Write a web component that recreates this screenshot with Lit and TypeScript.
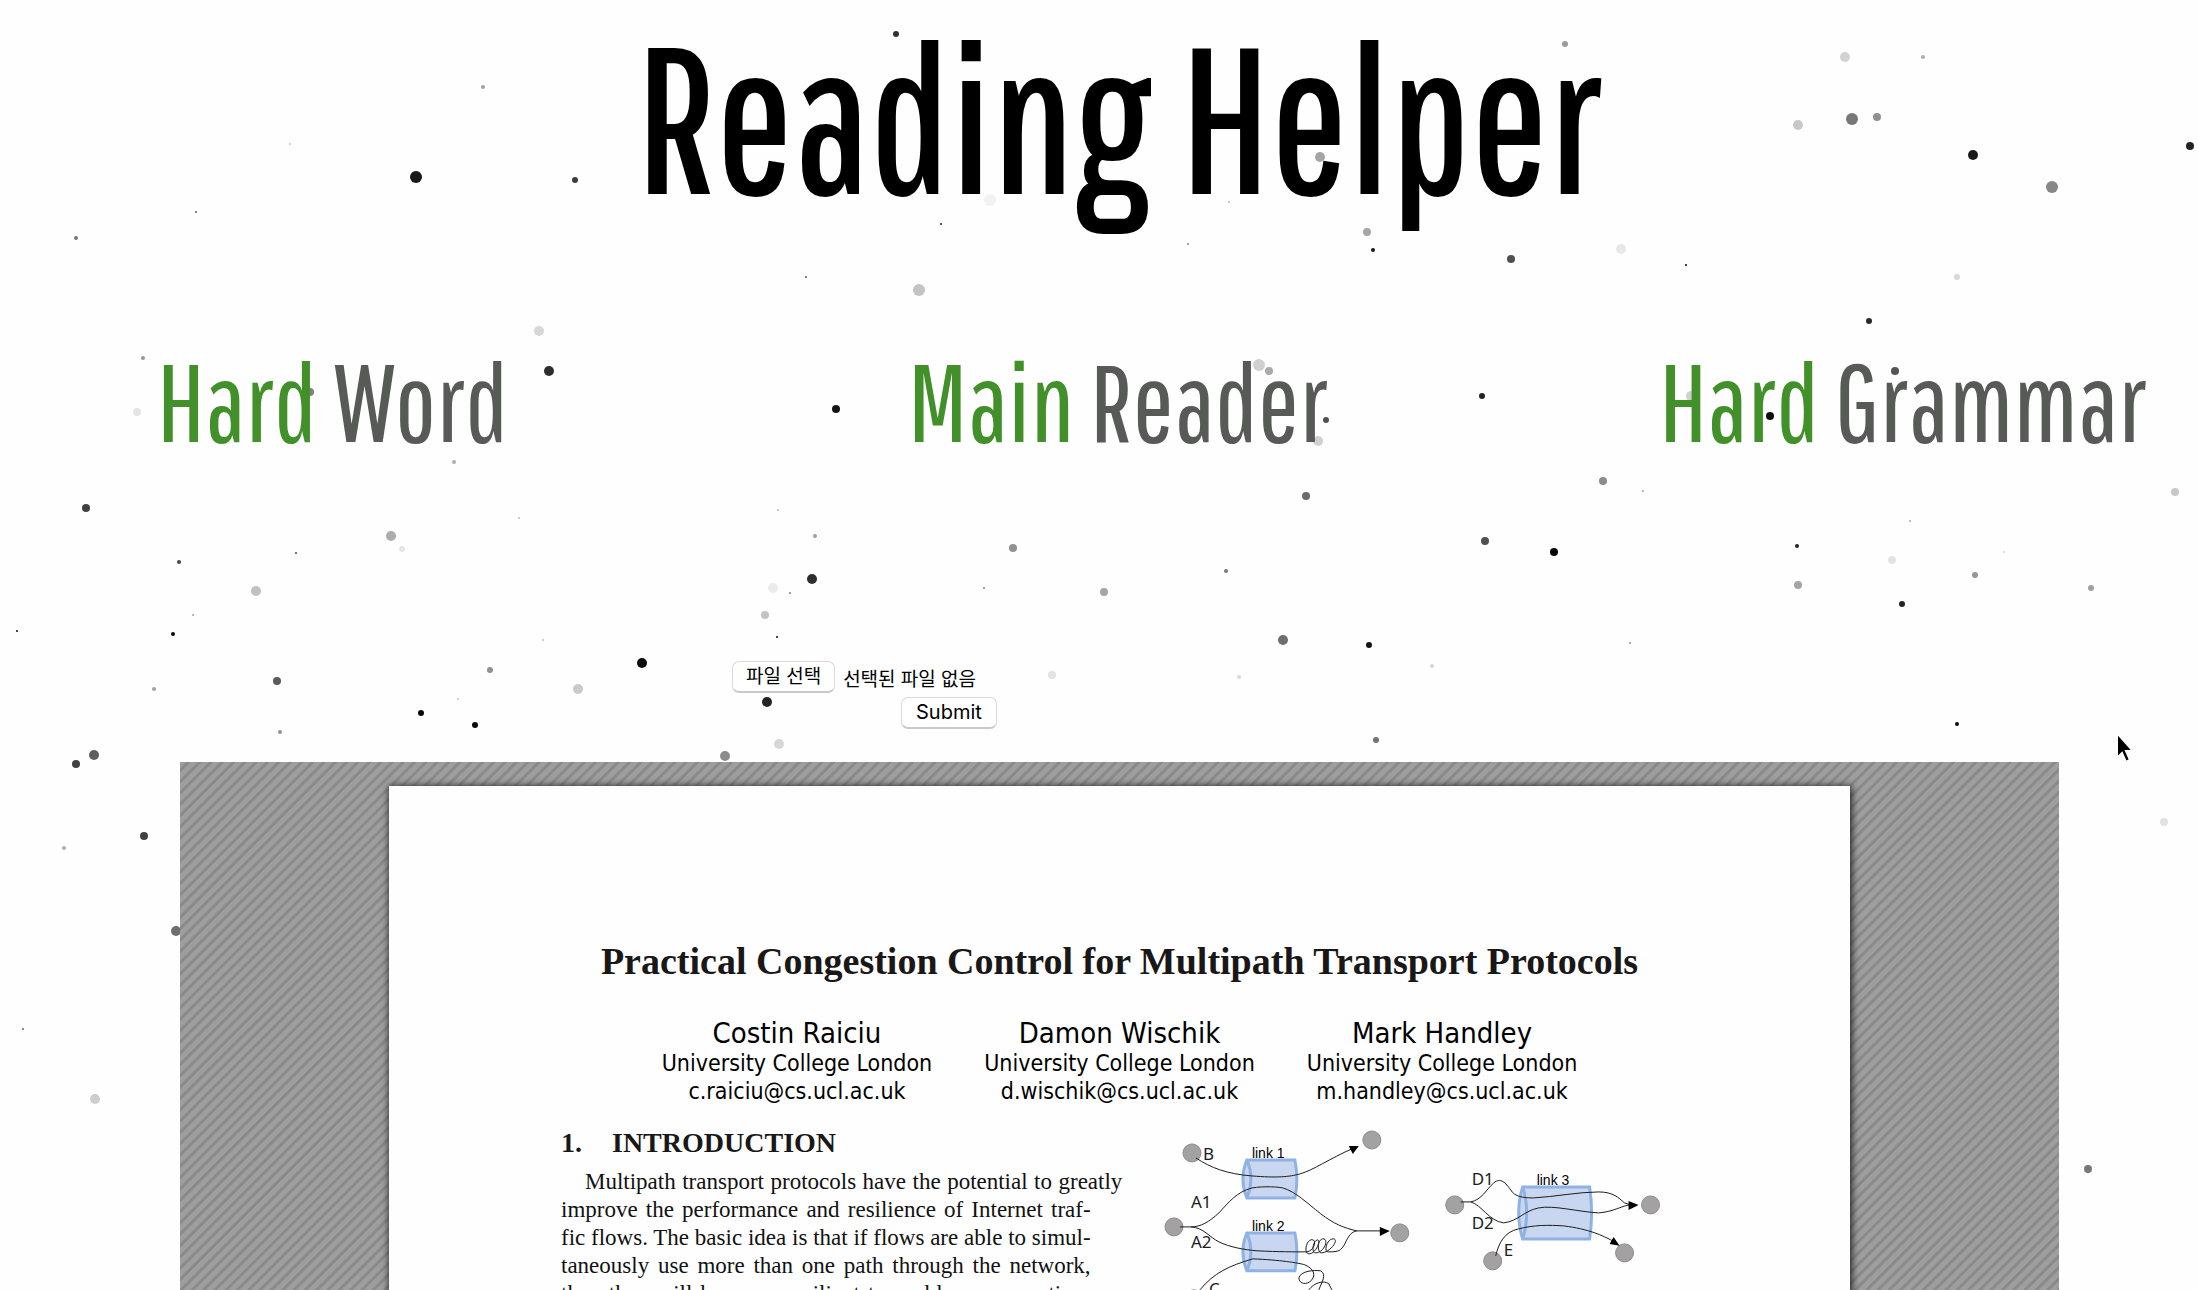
import { LitElement, html, svg, css } from "lit";
import { customElement } from "lit/decorators.js";

type Dot = [x: number, y: number, r: number, grey: number];

const DOTS: Dot[] = [
  [483, 87, 2, 160], [290, 144, 1, 190], [416, 177, 6, 25], [575, 180, 3, 60], [196, 212, 1, 90],
  [76, 238, 2, 120], [539, 331, 5, 215], [143, 358, 2, 150], [549, 371, 5, 45], [310, 392, 4, 130],
  [137, 412, 4, 228],
  [896, 34, 3, 50], [990, 200, 6, 242], [941, 224, 1, 30], [806, 277, 1, 90], [919, 290, 6, 195],
  [1188, 244, 1, 130], [1320, 157, 5, 165], [1367, 232, 4, 165], [1373, 250, 2, 25], [1229, 202, 1, 180],
  [1259, 365, 6, 208], [1269, 371, 4, 170], [1326, 420, 3, 80], [836, 409, 4, 20],
  [1565, 44, 3, 155], [1845, 57, 5, 210], [1923, 57, 2, 175], [1798, 125, 5, 200], [1852, 119, 6, 120],
  [1877, 117, 4, 145], [1973, 155, 5, 25], [2190, 146, 4, 35], [2052, 187, 6, 135], [1621, 249, 5, 232],
  [1511, 259, 4, 80], [1686, 265, 1, 10], [1957, 277, 3, 215], [1869, 321, 3, 40], [1895, 371, 4, 85],
  [1691, 396, 5, 208], [1770, 416, 4, 15], [1482, 396, 3, 35],
  [454, 462, 2, 175], [86, 508, 4, 65], [391, 536, 5, 172], [402, 549, 3, 230], [519, 518, 1, 185],
  [296, 553, 1, 70], [179, 562, 2, 70], [256, 591, 5, 192], [193, 615, 1, 165], [17, 631, 1, 10],
  [173, 634, 2, 10], [543, 640, 1, 195], [642, 663, 5, 10], [490, 670, 3, 145], [277, 681, 4, 90],
  [578, 689, 5, 202], [154, 689, 2, 160], [458, 699, 1, 195], [421, 713, 3, 10], [475, 725, 3, 10],
  [280, 732, 2, 150], [94, 755, 5, 95], [76, 764, 4, 65], [725, 756, 5, 140], [144, 836, 4, 65],
  [64, 848, 2, 175], [176, 931, 5, 110], [23, 1029, 1, 100], [95, 1099, 5, 205],
  [778, 510, 1, 185], [815, 536, 2, 160], [812, 579, 5, 45], [773, 588, 5, 235], [790, 593, 1, 130],
  [765, 615, 4, 195], [777, 637, 1, 10], [767, 702, 5, 35], [779, 744, 5, 215], [1013, 548, 4, 145],
  [984, 588, 1, 130], [1104, 592, 4, 165], [1226, 571, 2, 120], [1306, 496, 4, 105], [1318, 441, 5, 208],
  [1283, 640, 5, 110], [1369, 645, 3, 20], [1432, 666, 2, 215], [1239, 677, 2, 218], [1052, 675, 4, 226],
  [1376, 740, 3, 115],
  [1603, 481, 4, 140], [1643, 491, 1, 165], [2175, 492, 4, 200], [1910, 521, 1, 165], [1485, 541, 4, 80],
  [1554, 552, 4, 5], [1797, 546, 2, 35], [1892, 560, 4, 228], [2004, 552, 1, 210], [1798, 585, 4, 165],
  [1975, 575, 3, 150], [2091, 588, 3, 160], [1902, 604, 3, 35], [1630, 643, 1, 150], [1957, 724, 2, 10],
  [2164, 822, 4, 226], [2088, 1169, 4, 120],
];

const NODES = [[43, 43], [223, 30], [25, 117], [251, 123], [45, 189], [306, 95], [502, 95], [344, 151], [476, 143]];

const LINKS = [
  { x: 93, y: 50, w: 57, h: 38, name: "link 1", tx: 103 },
  { x: 93, y: 123, w: 57, h: 38, name: "link 2", tx: 103 },
  { x: 369, y: 77, w: 76, h: 52, name: "link 3", tx: 388 },
];

const FLOWS = [
  "M47 48C62 58 78 64 103 66S140 67 151 64C165 60 180 49 205 38",
  "M31 117H42C52 117 60 112 70 103C80 92 88 82 103 78C115 76 130 77 134 78C147 82 158 93 172 104C185 114 195 118 208 121H234",
  "M42 117C55 118 60 127 70 132C80 137 95 140 109 141C130 142 145 142 158 142C165 141 168 131 164 130C158 128 154 143 160 144C167 144 172 131 169 130C164 130 162 144 167 143C175 143 180 130 175 129C168 128 168 144 173 143C182 142 190 130 185 129C178 128 174 143 180 142C190 142 192 141 196 134C200 125 203 122 208 121",
  "M51 180C65 163 80 156 104 149C130 150 150 153 156 155C165 159 167 165 163 170C158 176 150 174 150 168C152 161 165 160 172 161C178 165 173 172 170 180",
  "M160 180C165 173 175 170 180 174L183 180",
  "M312 92H322C333 90 338 79 345 73C352 67 357 73 362 80C366 87 375 88 385 88C405 87 430 82 450 82C465 82 470 88 476 93L482 95",
  "M322 92C333 95 340 111 355 113C370 111 375 101 390 98C405 95 430 102 450 103C465 102 475 95 482 95",
  "M347 146C350 134 355 122 370 119C385 115 400 115 415 116C440 119 455 126 464 131",
];

const HEADS = ["210,36 200,36 204,44", "241,121 231,117 231,126", "490,95 480,91 480,100", "471,136 465,127 461,134"];

const LABELS: [string, number, number][] = [
  ["B", 54, 50], ["A1", 42, 98], ["A2", 42, 138], ["C", 60, 185], ["D1", 323, 75], ["D2", 323, 119], ["E", 355, 146],
];

@customElement("particle-field")
export class ParticleField extends LitElement {
  static styles = css`
    :host { display: block; }
    svg { display: block; width: 100%; height: 100%; }
  `;
  render() {
    return html`<svg aria-hidden="true">
      ${DOTS.map(([x, y, r, g]) => svg`<circle cx=${x} cy=${y} r=${r} fill="rgb(${g},${g},${g})"></circle>`)}
    </svg>`;
  }
}

@customElement("network-figure")
export class NetworkFigure extends LitElement {
  static styles = css`
    :host { display: block; padding-top: 5px; }
    svg { display: block; width: 100%; overflow: visible; }
    .node { fill: #a3a1a2; stroke: #8b8b8b; }
    .pipe { fill: #c8d6f0; stroke: #8fb2e3; stroke-width: 3; }
    .flow { fill: none; stroke: #1c1c1c; stroke-width: 1; }
    .head { fill: #000; }
    .link { font: 14px "Liberation Sans", sans-serif; }
    .label { font: 17px "Noto Sans", sans-serif; fill: #1c1c1c; }
  `;
  render() {
    return html`<svg viewBox="0 0 529 220" role="img" aria-label="Network paths">
      ${NODES.map(([x, y]) => svg`<circle class="node" cx=${x} cy=${y} r="9"></circle>`)}
      ${LINKS.map(({ x, y, w, h, name, tx }) => svg`
        <path class="pipe" d="M${x + 5} ${y}H${x + w - 4}Q${x + w} ${y + h / 2} ${x + w - 4} ${y + h}H${x + 5}Q${x - 3} ${y + h / 2} ${x + 5} ${y}Z"></path>
        <path class="pipe" d="M${x + 5} ${y}Q${x + 13} ${y + h / 2} ${x + 5} ${y + h}"></path>
        <text class="link" x=${tx} y=${y - 2}>${name}</text>`)}
      ${FLOWS.map((d) => svg`<path class="flow" d=${d}></path>`)}
      ${HEADS.map((p) => svg`<polygon class="head" points=${p}></polygon>`)}
      ${LABELS.map(([t, x, y]) => svg`<text class="label" x=${x} y=${y}>${t}</text>`)}
    </svg>`;
  }
}

const INTRO = [
  "Multipath transport protocols have the potential to greatly",
  "improve the performance and resilience of Internet traf-",
  "fic flows. The basic idea is that if flows are able to simul-",
  "taneously use more than one path through the network,",
  "then they will be more resilient to problems on particu-",
];

@customElement("paper-view")
export class PaperView extends LitElement {
  static styles = css`
    :host {
      display: block;
      overflow: hidden;
      padding: 24px 209px 0;
      background: repeating-linear-gradient(135deg, #9e9e9e 0 4px, #8a8a8a 5px 7px, #9e9e9e 8px);
    }
    .page {
      min-height: 1800px;
      padding: 147px 172px 0;
      background: #fefefe;
      box-shadow: 1px 1px 7px 1px #222;
      color: #1a1718;
    }
    h2, h3, p { margin: 0; }
    h2 {
      font: bold 38px/56px "Liberation Serif", serif;
      text-align: center;
      white-space: nowrap;
    }
    .authors { display: flex; justify-content: center; gap: 52px; margin-top: 28px; }
    .author {
      font: 23px/28px "DejaVu Sans Condensed", "DejaVu Sans", sans-serif;
      text-align: center;
      color: #000;
    }
    .name { font-size: 29px; line-height: 32px; }
    .columns { display: grid; grid-template-columns: 589fr 529fr; }
    h3 {
      display: flex;
      gap: 30px;
      margin-bottom: 5px;
      font: bold 28px/40px "Liberation Serif", serif;
    }
    .intro { padding-top: 18px; }
    .text {
      width: 90%;
      font: 23px/28px "Liberation Serif", serif;
      white-space: nowrap;
      text-align: justify;
      text-align-last: justify;
      color: #111;
    }
    .line { display: block; }
    .line:first-child { width: 106%; box-sizing: border-box; padding-left: 24px; }
  `;
  render() {
    const people = [["Costin Raiciu", "c.raiciu"], ["Damon Wischik", "d.wischik"], ["Mark Handley", "m.handley"]];
    return html`<article class="page">
      <h2>Practical Congestion Control for Multipath Transport Protocols</h2>
      <div class="authors">
        ${people.map(([name, user]) => html`<div class="author">
          <p class="name">${name}</p>
          <p>University College London</p>
          <p>${user}@cs.ucl.ac.uk</p>
        </div>`)}
      </div>
      <div class="columns">
        <section class="intro">
          <h3><span>1.</span><span>INTRODUCTION</span></h3>
          <p class="text">${INTRO.map((line) => html`<span class="line">${line}</span>`)}</p>
        </section>
        <network-figure></network-figure>
      </div>
    </article>`;
  }
}

@customElement("app-root")
export class AppRoot extends LitElement {
  static styles = css`
    :host {
      position: relative;
      display: flex;
      flex-direction: column;
      height: 100vh;
      overflow: hidden;
      background: #fefefe;
      font-family: "Liberation Sans", "Noto Sans CJK KR", sans-serif;
    }
    h1, h2 { margin: 0; font-family: "Pathway Gothic One", "Roboto Condensed", sans-serif; font-weight: 400; white-space: nowrap; }
    h1 { padding-left: 40px; font-size: 206px; line-height: 230px; text-align: center; color: #000; -webkit-text-stroke: 2px #000; }
    particle-field { position: absolute; inset: 0; }
    .heads {
      position: relative;
      display: grid;
      grid-template-columns: 36.8% 36.8% 1fr;
      padding: 103px 0 0 157px;
      color: #585a58;
    }
    h2 { font-size: 110px; line-height: 136px; }
    .accent { color: #419029; }
    form {
      position: relative;
      display: flex;
      flex-direction: column;
      align-items: center;
      gap: 4px;
      width: 434px;
      margin: 192px 0 33px 33.3%;
      font-size: 20px;
    }
    .file { position: relative; display: flex; align-items: center; gap: 8px; width: 100%; }
    .file input { position: absolute; inset: 0; width: 100%; opacity: 0; }
    .button {
      box-sizing: border-box;
      height: 32px;
      padding: 0 13px;
      border: 1px solid #d9d9d9;
      border-bottom: 2px solid #c9c9c9;
      border-radius: 7px;
      background: #fff;
      color: #000;
      line-height: 30px;
    }
    button.button { padding: 0 14px; font: 20px/29px Inter, sans-serif; }
    .file span { font-size: 19px; }
    paper-view { position: relative; flex: 1; min-height: 0; margin: 0 139px 0 180px; }
    .pointer { position: absolute; left: 2114px; top: 728px; width: 26px; height: 38px; }
  `;
  render() {
    return html`
      <h1>Reading Helper</h1>
      <particle-field></particle-field>
      <div class="heads">
        <h2><span class="accent">Hard</span> Word</h2>
        <h2><span class="accent">Main</span> Reader</h2>
        <h2><span class="accent">Hard</span> Grammar</h2>
      </div>
      <form @submit=${(e: Event) => e.preventDefault()}>
        <label class="file">
          <span class="button">파일 선택</span>
          <span>선택된 파일 없음</span>
          <input type="file" />
        </label>
        <button class="button" type="submit">Submit</button>
      </form>
      <paper-view></paper-view>
      <svg class="pointer" viewBox="0 0 26 38" aria-hidden="true">
        <path d="M3 5V30L8 25L12 34L16 32L12 23H19Z" fill="#000" stroke="#fff" stroke-width="2"></path>
      </svg>
    `;
  }
}
